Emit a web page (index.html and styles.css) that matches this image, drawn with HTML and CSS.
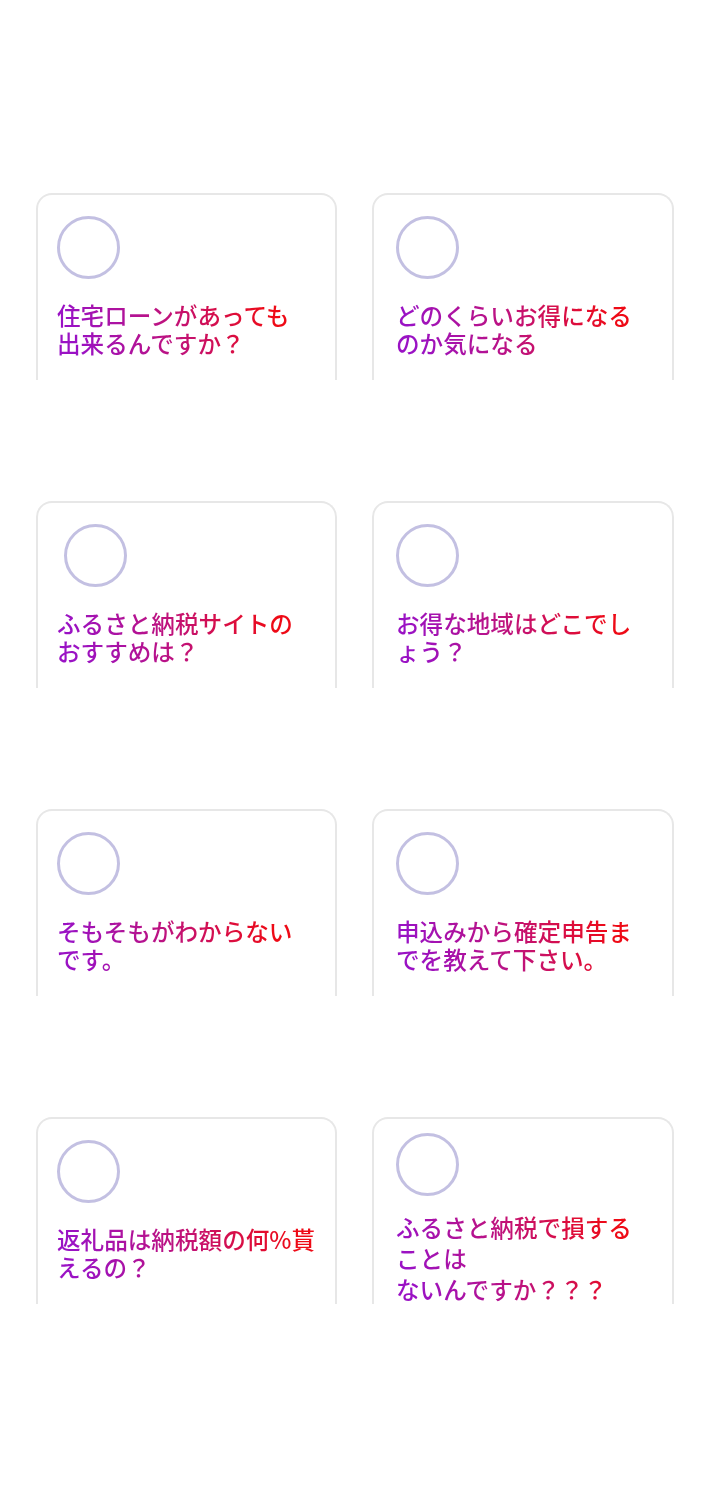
FILE: index.html
```html
<!DOCTYPE html>
<html lang="ja">
<head>
	<meta charset="utf-8">
	<title>よくある質問</title>
	<link rel="stylesheet" href="styles.css">
</head>
<body>
	<div class="questions">
		<div class="card">
			<div class="avatar"></div>
			<p class="question">住宅ローンがあっても<br>出来るんですか？</p>
		</div>
		<div class="card shift">
			<div class="avatar"></div>
			<p class="question">どのくらいお得になる<br>のか気になる</p>
		</div>

		<div class="card">
			<div class="avatar indent"></div>
			<p class="question">ふるさと納税サイトの<br>おすすめは？</p>
		</div>
		<div class="card shift">
			<div class="avatar"></div>
			<p class="question">お得な地域はどこでし<br>ょう？</p>
		</div>

		<div class="card">
			<div class="avatar"></div>
			<p class="question">そもそもがわからない<br>です。</p>
		</div>
		<div class="card shift">
			<div class="avatar"></div>
			<p class="question">申込みから確定申告ま<br>でを教えて下さい。</p>
		</div>

		<div class="card">
			<div class="avatar"></div>
			<p class="question">返礼品は納税額の何%貰<br>えるの？</p>
		</div>
		<div class="card shift tall">
			<div class="avatar"></div>
			<p class="question">ふるさと納税で損する<br>ことは<br>ないんですか？？？</p>
		</div>
	</div>
</body>
</html>
```

FILE: styles.css
```css
* {
	margin: 0;
	padding: 0;
	box-sizing: border-box;
}

body {
	background: #fff;
	font-family: "Noto Sans CJK JP", "Noto Sans", sans-serif;
}

.questions {
	display: grid;
	grid-template-columns: 301px 302px;
	column-gap: 35px;
	row-gap: 121px;
	padding: 193px 0 0 36px;
}

.card {
	height: 187px;
	padding: 21px 0 0 19px;
	border: 2px solid #e7e7e7;
	border-bottom: none;
	border-radius: 16px 16px 0 0;
}

.card.shift {
	padding-left: 22px;
}

.card.tall {
	padding-top: 14px;
}

.avatar {
	width: 63px;
	height: 63px;
	border: 3px solid #c3c0e2;
	border-radius: 50%;
}

.avatar.indent {
	margin-left: 7px;
}

.question {
	display: inline-block;
	margin-top: 22px;
	font-size: 23.6px;
	font-weight: 500;
	line-height: 28px;
	background: linear-gradient(70deg, #9a12c4 10%, #c0127a 50%, #ee0a16 90%);
	-webkit-background-clip: text;
	background-clip: text;
	color: transparent;
}

.tall .question {
	margin-top: 16px;
	line-height: 31px;
}
```
